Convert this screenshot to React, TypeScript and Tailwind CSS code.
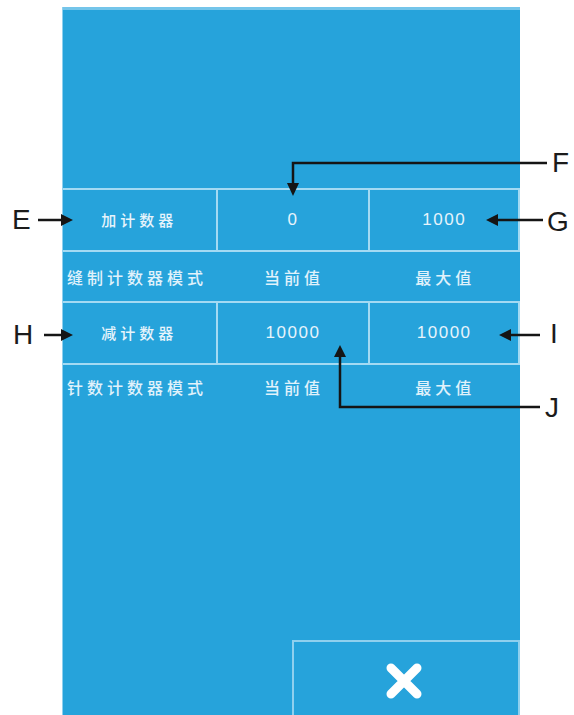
import React from "react";

const cjk = { fontFamily: '"Noto Sans CJK SC", "Noto Sans", sans-serif' };
const lat = { fontFamily: '"Liberation Sans", Arial, sans-serif' };

function Cell({ children, w, num }: { children: React.ReactNode; w: string; num?: boolean }) {
  return (
    <div
      className={`${w} flex items-center justify-center text-[#e6f4fb] ${num ? "text-[17px] tracking-[1.5px]" : "text-[15px] font-medium tracking-[4px]"}`}
      style={num ? lat : cjk}
    >
      {children}
    </div>
  );
}

function CounterRow({ a, b, c }: { a: string; b: string; c: string }) {
  return (
    <div className="flex h-[64px] border-y-2 border-[#a3daf3]">
      <Cell w="w-[153px]">{a}</Cell>
      <div className="w-[2px] bg-[#a3daf3]" />
      <Cell w="w-[151px]" num>{b}</Cell>
      <div className="w-[2px] bg-[#a3daf3]" />
      <Cell w="w-[148px]" num>{c}</Cell>
      <div className="w-[2px] bg-[#a3daf3]" />
    </div>
  );
}

function LabelRow({ mode, h }: { mode: string; h: string }) {
  return (
    <div className={`flex ${h} items-center text-[16px] font-medium text-[#e0f2fb] tracking-[4px]`} style={cjk}>
      <div className="w-[155px] pl-[4px] whitespace-nowrap">{mode}</div>
      <div className="w-[153px] text-center">当前值</div>
      <div className="w-[150px] text-center">最大值</div>
    </div>
  );
}

function Letter({ ch, cls }: { ch: string; cls: string }) {
  return (
    <div className={`absolute text-[28px] leading-[28px] text-[#1b1b1b] ${cls}`} style={lat}>
      {ch}
    </div>
  );
}

export default function App() {
  return (
    <div className="relative w-[574px] h-[715px] bg-white overflow-hidden">
      <div className="ml-[62px] pt-[7px] w-[458px] h-[715px]">
        <div className="flex flex-col h-full bg-[#26a3db] border-l border-[#8fd0ee]">
          <div className="h-[3px] bg-[#74c5ea]" />
          <div className="h-[178px]" />
          <CounterRow a="加计数器" b="0" c="1000" />
          <LabelRow mode="缝制计数器模式" h="h-[49px]" />
          <CounterRow a="减计数器" b="10000" c="10000" />
          <LabelRow mode="针数计数器模式" h="h-[44px]" />
          <div className="flex-1" />
          <div className="flex justify-end">
            <div className="w-[228px] h-[75px] border-2 border-b-0 border-[#8fd0ee] flex items-center justify-center">
              <svg width="40" height="36" viewBox="0 0 40 36" className="ml-[-4px] mt-[4px]">
                <path d="M7 5 L33 31 M33 5 L7 31" stroke="#ffffff" strokeWidth="9" strokeLinecap="round" />
              </svg>
            </div>
          </div>
        </div>
      </div>

      <svg className="absolute left-0 top-0" width="574" height="715" viewBox="0 0 574 715">
        <g stroke="#151515" strokeWidth="2.5" fill="none">
          <path d="M38 220 H64" />
          <path d="M547 163 H293 V185" />
          <path d="M543 220 H495" />
          <path d="M44 335 H64" />
          <path d="M540 335 H508" />
          <path d="M540 407 H340 V354" />
        </g>
        <g fill="#151515">
          <path d="M73 220 L61 214 L61 226 Z" />
          <path d="M293 196 L287 183 L299 183 Z" />
          <path d="M486 220 L498 214 L498 226 Z" />
          <path d="M73 335 L61 329 L61 341 Z" />
          <path d="M499 335 L511 329 L511 341 Z" />
          <path d="M340 345 L334 357 L346 357 Z" />
        </g>
      </svg>

      <Letter ch="E" cls="left-[12px] top-[206px]" />
      <Letter ch="F" cls="left-[552px] top-[149px]" />
      <Letter ch="G" cls="left-[547px] top-[208px]" />
      <Letter ch="H" cls="left-[13px] top-[321px]" />
      <Letter ch="I" cls="left-[550px] top-[320px]" />
      <Letter ch="J" cls="left-[545px] top-[394px]" />
    </div>
  );
}
